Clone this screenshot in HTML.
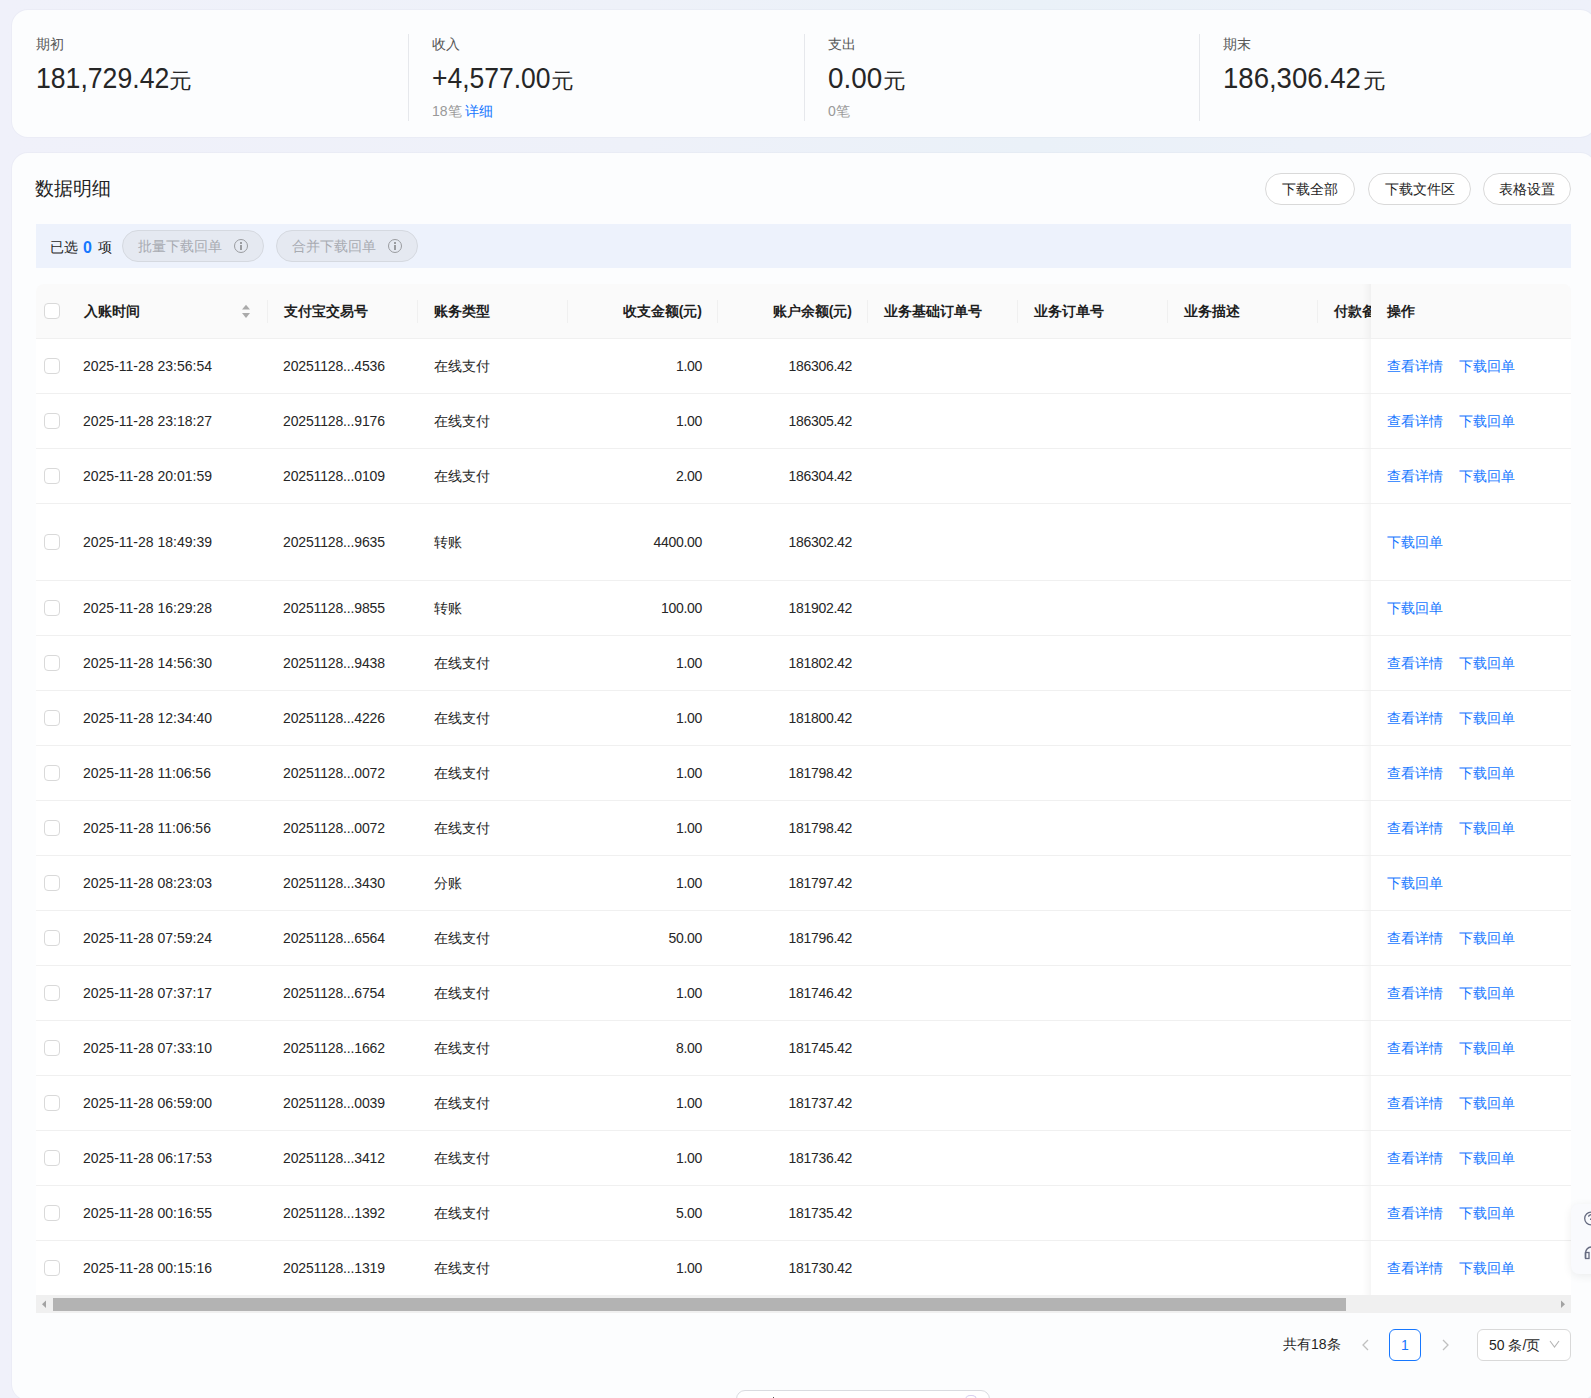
<!DOCTYPE html>
<html><head><meta charset="utf-8">
<style>
*{box-sizing:border-box;margin:0;padding:0}
html,body{width:1591px;height:1398px;overflow:hidden}
body{background:linear-gradient(90deg,#f0f1fa 0%,#eef1f9 40%,#eaf1f8 65%,#eef1fa 100%);font-family:"Liberation Sans",sans-serif;color:#1f1f1f;position:relative}
.card{position:absolute;background:#fcfdfe;border-radius:16px;box-shadow:0 0 0 1px rgba(30,50,90,0.025)}
#c1{left:12px;top:10px;width:1584px;height:127px}
#c2{left:12px;top:153px;width:1584px;height:1247px}
.st{position:absolute;top:0;height:127px}
.dv{position:absolute;top:24px;width:1px;height:87px;background:#e6e8ec}
.lab{position:absolute;top:26px;font-size:14px;color:#555;line-height:18px}
.big{position:absolute;top:62px;font-size:29px;line-height:32px;color:#262626;white-space:nowrap}
.big .n{display:inline-block;transform:scaleX(0.905);transform-origin:0 50%}
.big .y{position:absolute;font-size:21px;top:3px;transform:scaleX(1.08);transform-origin:0 50%}
.sub{position:absolute;top:93px;font-size:14px;color:#999;line-height:18px}
.sub .b{color:#1677ff}
.title{position:absolute;left:35px;top:178px;font-size:19px;line-height:22px;color:#1f1f1f}
.btn{position:absolute;top:173px;height:32px;border:1px solid #d9d9d9;border-radius:16px;background:#fff;font-size:14px;line-height:30px;text-align:center;color:#1f1f1f}
.selbar{position:absolute;left:36px;top:224px;width:1535px;height:44px;background:#edf2fc}
.pill{position:absolute;top:230px;height:32px;border:1px solid #d5d9e0;border-radius:16px;background:#e5e9f1;font-size:14px;color:#a8abb1;line-height:30px}
.pill span{position:absolute;left:15px;top:0}
.pill i{position:absolute;left:111px;top:8px;width:14px;height:14px;border:1px solid #9a9ca0;border-radius:50%}
.pill i:before{content:"";position:absolute;left:5px;top:2px;width:2px;height:2px;background:#9a9ca0}
.pill i:after{content:"";position:absolute;left:5px;top:5px;width:2px;height:5px;background:#9a9ca0}
.seltxt{position:absolute;left:50px;top:237px;font-size:14px;line-height:20px;color:#1f1f1f}
.seltxt b{color:#1677ff;font-size:16px;margin:0 6px 0 5px;vertical-align:-1px}
.thead{position:absolute;left:36px;top:284px;width:1535px;height:55px;background:#fafafa;border-radius:8px 8px 0 0;border-bottom:1px solid #f0f0f0}
.th{position:absolute;top:0;height:54px;line-height:54px;font-size:14px;font-weight:bold;color:#1f1f1f;white-space:nowrap}
.tsep{position:absolute;top:16px;width:1px;height:23px;background:#f0f0f0}
.tr{position:absolute;left:36px;width:1535px;background:#fff;border-bottom:1px solid #f0f0f0}
.tr.last{border-bottom:none}
.tr .c{position:absolute;top:0;height:100%;display:flex;align-items:center;font-size:14px;white-space:nowrap;color:#262626}
.num{letter-spacing:0}
.c2{letter-spacing:-0.15px}
.c4,.c5{letter-spacing:-0.3px}
.c1{left:47px}.c2{left:247px}.c3{left:398px;padding-top:2px}
.c4{right:869px;justify-content:flex-end}
.c5{right:719px;justify-content:flex-end}
.cb{position:absolute;left:8px;top:50%;margin-top:-8px;width:16px;height:16px;border:1px solid #d9d9d9;border-radius:4px;background:#fff}
.fx{position:absolute;left:1335px;top:0;width:200px;height:100%;background:#fff;display:flex;align-items:center;padding-left:16px;padding-top:2px;font-size:14px}
.fx:before{content:"";position:absolute;left:-30px;top:0;width:30px;height:100%;box-shadow:inset -10px 0 8px -8px rgba(5,5,5,0.06)}
.lk{color:#1677ff}
.l2{margin-left:16px}
.fxh{position:absolute;left:1335px;top:0;width:200px;height:54px;background:#fafafa;border-radius:0 8px 0 0}
.fxh:before{content:"";position:absolute;left:-30px;top:0;width:30px;height:100%;box-shadow:inset -10px 0 8px -8px rgba(5,5,5,0.06)}
.sb{position:absolute;left:36px;top:1295px;width:1535px;height:18px;background:#f0f0f0}
.thumb{position:absolute;left:17px;top:3px;width:1293px;height:13px;background:#b3b3b3}
.pg{position:absolute;font-size:14px;line-height:20px;color:#1f1f1f}
.pbox{position:absolute;left:1389px;top:1329px;width:32px;height:32px;border:1px solid #1677ff;border-radius:6px;color:#1677ff;font-size:14px;text-align:center;line-height:30px;background:#fff}
.sel{position:absolute;left:1477px;top:1329px;width:94px;height:32px;border:1px solid #d9d9d9;border-radius:6px;background:#fff;font-size:14px;line-height:30px;color:#1f1f1f}
</style></head><body>
<div class="card" id="c1"></div>
<!-- stats -->
<div class="lab" style="left:36px;top:35px">期初</div>
<div class="big" style="left:36px"><span class="n" style="transform:scaleX(0.918)">181,729.42</span><span class="y" style="left:133px">元</span></div>
<div class="dv" style="left:408px;top:34px"></div>
<div class="lab" style="left:432px;top:35px">收入</div>
<div class="big" style="left:432px"><span class="n" style="transform:scaleX(0.913)">+4,577.00</span><span class="y" style="left:119px">元</span></div>
<div class="sub" style="left:432px;top:102px">18笔 <span class="b">详细</span></div>
<div class="dv" style="left:804px;top:34px"></div>
<div class="lab" style="left:828px;top:35px">支出</div>
<div class="big" style="left:828px"><span class="n" style="transform:scaleX(0.96)">0.00</span><span class="y" style="left:55px">元</span></div>
<div class="sub" style="left:828px;top:102px">0笔</div>
<div class="dv" style="left:1199px;top:34px"></div>
<div class="lab" style="left:1223px;top:35px">期末</div>
<div class="big" style="left:1223px"><span class="n" style="transform:scaleX(0.95)">186,306.42</span><span class="y" style="left:140px">元</span></div>

<div class="card" id="c2"></div>
<div class="title">数据明细</div>
<div class="btn" style="left:1265px;width:90px">下载全部</div>
<div class="btn" style="left:1368px;width:103px">下载文件区</div>
<div class="btn" style="left:1483px;width:88px">表格设置</div>

<div class="selbar"></div>
<div class="seltxt">已选<b>0</b>项</div>
<div class="pill" style="left:122px;width:142px"><span>批量下载回单</span><i></i></div>
<div class="pill" style="left:276px;width:142px"><span>合并下载回单</span><i></i></div>

<div class="thead">
 <div class="cb" style="top:19px;margin-top:0"></div>
 <div class="th" style="left:48px">入账时间</div>
 <svg style="position:absolute;left:205px;top:20px" width="10" height="15" viewBox="0 0 10 15"><path d="M5 0.8 L9 5.6 L1 5.6 Z" fill="#aaa"/><path d="M5 14 L9 9.1 L1 9.1 Z" fill="#aaa"/></svg>
 <div class="tsep" style="left:231px"></div>
 <div class="th" style="left:248px">支付宝交易号</div>
 <div class="tsep" style="left:381px"></div>
 <div class="th" style="left:398px">账务类型</div>
 <div class="tsep" style="left:531px"></div>
 <div class="th" style="right:869px">收支金额(元)</div>
 <div class="tsep" style="left:681px"></div>
 <div class="th" style="right:719px">账户余额(元)</div>
 <div class="tsep" style="left:831px"></div>
 <div class="th" style="left:848px">业务基础订单号</div>
 <div class="tsep" style="left:981px"></div>
 <div class="th" style="left:998px">业务订单号</div>
 <div class="tsep" style="left:1131px"></div>
 <div class="th" style="left:1148px">业务描述</div>
 <div class="tsep" style="left:1281px"></div>
 <div class="th" style="left:1298px">付款备注</div>
 <div class="fxh"><div class="th" style="left:16px">操作</div></div>
</div>
<div class="tr" style="top:339px;height:55px">
<div class="cb"></div><div class="c c1 num">2025-11-28 23:56:54</div><div class="c c2 num">20251128...4536</div><div class="c c3">在线支付</div><div class="c c4 num r">1.00</div><div class="c c5 num r">186306.42</div>
<div class="fx"><span class="lk">查看详情</span><span class="lk l2">下载回单</span></div></div>
<div class="tr" style="top:394px;height:55px">
<div class="cb"></div><div class="c c1 num">2025-11-28 23:18:27</div><div class="c c2 num">20251128...9176</div><div class="c c3">在线支付</div><div class="c c4 num r">1.00</div><div class="c c5 num r">186305.42</div>
<div class="fx"><span class="lk">查看详情</span><span class="lk l2">下载回单</span></div></div>
<div class="tr" style="top:449px;height:55px">
<div class="cb"></div><div class="c c1 num">2025-11-28 20:01:59</div><div class="c c2 num">20251128...0109</div><div class="c c3">在线支付</div><div class="c c4 num r">2.00</div><div class="c c5 num r">186304.42</div>
<div class="fx"><span class="lk">查看详情</span><span class="lk l2">下载回单</span></div></div>
<div class="tr" style="top:504px;height:77px">
<div class="cb"></div><div class="c c1 num">2025-11-28 18:49:39</div><div class="c c2 num">20251128...9635</div><div class="c c3">转账</div><div class="c c4 num r">4400.00</div><div class="c c5 num r">186302.42</div>
<div class="fx"><span class="lk">下载回单</span></div></div>
<div class="tr" style="top:581px;height:55px">
<div class="cb"></div><div class="c c1 num">2025-11-28 16:29:28</div><div class="c c2 num">20251128...9855</div><div class="c c3">转账</div><div class="c c4 num r">100.00</div><div class="c c5 num r">181902.42</div>
<div class="fx"><span class="lk">下载回单</span></div></div>
<div class="tr" style="top:636px;height:55px">
<div class="cb"></div><div class="c c1 num">2025-11-28 14:56:30</div><div class="c c2 num">20251128...9438</div><div class="c c3">在线支付</div><div class="c c4 num r">1.00</div><div class="c c5 num r">181802.42</div>
<div class="fx"><span class="lk">查看详情</span><span class="lk l2">下载回单</span></div></div>
<div class="tr" style="top:691px;height:55px">
<div class="cb"></div><div class="c c1 num">2025-11-28 12:34:40</div><div class="c c2 num">20251128...4226</div><div class="c c3">在线支付</div><div class="c c4 num r">1.00</div><div class="c c5 num r">181800.42</div>
<div class="fx"><span class="lk">查看详情</span><span class="lk l2">下载回单</span></div></div>
<div class="tr" style="top:746px;height:55px">
<div class="cb"></div><div class="c c1 num">2025-11-28 11:06:56</div><div class="c c2 num">20251128...0072</div><div class="c c3">在线支付</div><div class="c c4 num r">1.00</div><div class="c c5 num r">181798.42</div>
<div class="fx"><span class="lk">查看详情</span><span class="lk l2">下载回单</span></div></div>
<div class="tr" style="top:801px;height:55px">
<div class="cb"></div><div class="c c1 num">2025-11-28 11:06:56</div><div class="c c2 num">20251128...0072</div><div class="c c3">在线支付</div><div class="c c4 num r">1.00</div><div class="c c5 num r">181798.42</div>
<div class="fx"><span class="lk">查看详情</span><span class="lk l2">下载回单</span></div></div>
<div class="tr" style="top:856px;height:55px">
<div class="cb"></div><div class="c c1 num">2025-11-28 08:23:03</div><div class="c c2 num">20251128...3430</div><div class="c c3">分账</div><div class="c c4 num r">1.00</div><div class="c c5 num r">181797.42</div>
<div class="fx"><span class="lk">下载回单</span></div></div>
<div class="tr" style="top:911px;height:55px">
<div class="cb"></div><div class="c c1 num">2025-11-28 07:59:24</div><div class="c c2 num">20251128...6564</div><div class="c c3">在线支付</div><div class="c c4 num r">50.00</div><div class="c c5 num r">181796.42</div>
<div class="fx"><span class="lk">查看详情</span><span class="lk l2">下载回单</span></div></div>
<div class="tr" style="top:966px;height:55px">
<div class="cb"></div><div class="c c1 num">2025-11-28 07:37:17</div><div class="c c2 num">20251128...6754</div><div class="c c3">在线支付</div><div class="c c4 num r">1.00</div><div class="c c5 num r">181746.42</div>
<div class="fx"><span class="lk">查看详情</span><span class="lk l2">下载回单</span></div></div>
<div class="tr" style="top:1021px;height:55px">
<div class="cb"></div><div class="c c1 num">2025-11-28 07:33:10</div><div class="c c2 num">20251128...1662</div><div class="c c3">在线支付</div><div class="c c4 num r">8.00</div><div class="c c5 num r">181745.42</div>
<div class="fx"><span class="lk">查看详情</span><span class="lk l2">下载回单</span></div></div>
<div class="tr" style="top:1076px;height:55px">
<div class="cb"></div><div class="c c1 num">2025-11-28 06:59:00</div><div class="c c2 num">20251128...0039</div><div class="c c3">在线支付</div><div class="c c4 num r">1.00</div><div class="c c5 num r">181737.42</div>
<div class="fx"><span class="lk">查看详情</span><span class="lk l2">下载回单</span></div></div>
<div class="tr" style="top:1131px;height:55px">
<div class="cb"></div><div class="c c1 num">2025-11-28 06:17:53</div><div class="c c2 num">20251128...3412</div><div class="c c3">在线支付</div><div class="c c4 num r">1.00</div><div class="c c5 num r">181736.42</div>
<div class="fx"><span class="lk">查看详情</span><span class="lk l2">下载回单</span></div></div>
<div class="tr" style="top:1186px;height:55px">
<div class="cb"></div><div class="c c1 num">2025-11-28 00:16:55</div><div class="c c2 num">20251128...1392</div><div class="c c3">在线支付</div><div class="c c4 num r">5.00</div><div class="c c5 num r">181735.42</div>
<div class="fx"><span class="lk">查看详情</span><span class="lk l2">下载回单</span></div></div>
<div class="tr last" style="top:1241px;height:54px">
<div class="cb"></div><div class="c c1 num">2025-11-28 00:15:16</div><div class="c c2 num">20251128...1319</div><div class="c c3">在线支付</div><div class="c c4 num r">1.00</div><div class="c c5 num r">181730.42</div>
<div class="fx"><span class="lk">查看详情</span><span class="lk l2">下载回单</span></div></div>
<div class="sb"><svg style="position:absolute;left:5px;top:5px" width="6" height="9"><path d="M5 0.5 L5 8 L1 4.25 Z" fill="#a3a3a3"/></svg><div class="thumb"></div><svg style="position:absolute;left:1525px;top:5px" width="6" height="9"><path d="M0 0.5 L0 8 L4 4.25 Z" fill="#a3a3a3"/></svg></div>

<div class="pg" style="left:1283px;top:1334px">共有18条</div>
<svg style="position:absolute;left:1361px;top:1339px" width="9" height="12"><path d="M7 1 L2 6 L7 11" stroke="#c0c0c0" stroke-width="1.3" fill="none"/></svg>
<div class="pbox">1</div>
<svg style="position:absolute;left:1441px;top:1339px" width="9" height="12"><path d="M2 1 L7 6 L2 11" stroke="#c0c0c0" stroke-width="1.3" fill="none"/></svg>
<div class="sel"><span style="position:absolute;left:11px">50 条/页</span><svg style="position:absolute;left:71px;top:10px" width="11" height="9"><path d="M1 1 L5.5 7 L10 1" stroke="#b5b5b5" stroke-width="1.1" fill="none"/></svg></div>

<div style="position:absolute;left:1571px;top:1204px;width:40px;height:70px;border-radius:8px;background:#f9fafd;box-shadow:0 2px 10px rgba(0,0,0,0.07)">
<svg style="position:absolute;left:0;top:0" width="40" height="70" viewBox="0 0 40 70"><circle cx="20" cy="14.5" r="6.3" stroke="#666b80" stroke-width="1.3" fill="none"/><path d="M17.6 12.8 a2 2 0 1 1 2.8 1.8 c-0.6 0.3 -0.8 0.7 -0.8 1.3" stroke="#666b80" stroke-width="1.3" fill="none"/><path d="M14.5 54 V49 A6 6 0 0 1 26.5 49 V54" stroke="#666b80" stroke-width="1.5" fill="none"/><rect x="14.5" y="48.5" width="3.5" height="6" stroke="#666b80" stroke-width="1.3" fill="none"/></svg>
</div>
<div style="position:absolute;left:736px;top:1390px;width:254px;height:30px;border:1px solid #d9dbe0;border-radius:9px;background:#fff"><div style="position:absolute;left:36px;top:6px;width:1px;height:8px;background:#555"></div><div style="position:absolute;left:228px;top:4px;width:12px;height:8px;border:1px solid #d8d0ef;border-radius:5px 5px 0 0;border-bottom:none"></div></div>
</body></html>
